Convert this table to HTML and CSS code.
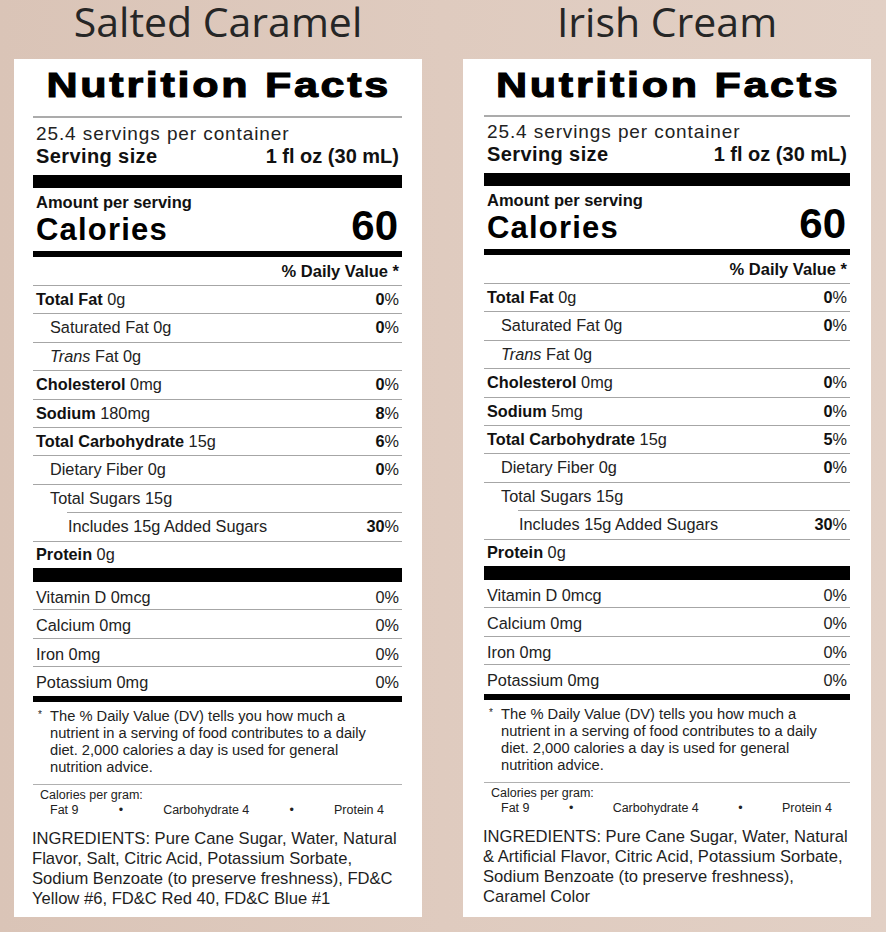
FILE: index.html
```html
<!DOCTYPE html>
<html lang="en">
<head>
<meta charset="utf-8">
<title>Nutrition Facts</title>
<link rel="stylesheet" href="styles.css">
</head>
<body>
<main class="page">
  <section class="product">
    <h2 class="flavor">Salted Caramel</h2>
    <div class="label label--left">
      <h1 class="nf-title">Nutrition Facts</h1>
      <div class="rule-thin"></div>
      <div class="servings">25.4 servings per container</div>
      <div class="serving-size"><span>Serving size</span><span>1 fl oz (30 mL)</span></div>
      <div class="bar bar-13"></div>
      <div class="amount">Amount per serving</div>
      <div class="calories"><span class="cal-label">Calories</span><span class="cal-num">60</span></div>
      <div class="bar bar-6"></div>
      <div class="dv-head">% Daily Value *</div>
      <div class="row"><span><b>Total Fat</b> 0g</span><span><b>0</b>%</span></div>
      <div class="row sub"><span>Saturated Fat 0g</span><span><b>0</b>%</span></div>
      <div class="row sub"><span><i>Trans</i> Fat 0g</span><span></span></div>
      <div class="row"><span><b>Cholesterol</b> 0mg</span><span><b>0</b>%</span></div>
      <div class="row"><span><b>Sodium</b> 180mg</span><span><b>8</b>%</span></div>
      <div class="row"><span><b>Total Carbohydrate</b> 15g</span><span><b>6</b>%</span></div>
      <div class="row sub"><span>Dietary Fiber 0g</span><span><b>0</b>%</span></div>
      <div class="row sub row--open"><span>Total Sugars 15g</span><span></span></div>
      <div class="rule-indent"></div>
      <div class="row subsub"><span>Includes 15g Added Sugars</span><span><b>30</b>%</span></div>
      <div class="row row--protein"><span><b>Protein</b> 0g</span><span></span></div>
      <div class="bar bar-14"></div>
      <div class="row vit"><span>Vitamin D 0mcg</span><span>0%</span></div>
      <div class="row vit"><span>Calcium 0mg</span><span>0%</span></div>
      <div class="row vit"><span>Iron 0mg</span><span>0%</span></div>
      <div class="row vit row--open"><span>Potassium 0mg</span><span>0%</span></div>
      <div class="bar bar-6b"></div>
      <div class="footnote"><span class="ast">*</span><p class="footnote-text">The % Daily Value (DV) tells you how much a nutrient in a serving of food contributes to a daily diet. 2,000 calories a day is used for general nutrition advice.</p></div>
      <div class="cal-gram">Calories per gram:</div>
      <div class="macros"><span>Fat 9</span><span>•</span><span>Carbohydrate 4</span><span>•</span><span>Protein 4</span></div>
      <p class="ingredients">INGREDIENTS: Pure Cane Sugar, Water, Natural Flavor, Salt, Citric Acid, Potassium Sorbate, Sodium Benzoate (to preserve freshness), FD&amp;C Yellow #6, FD&amp;C Red 40, FD&amp;C Blue #1</p>
    </div>
  </section>

  <section class="product">
    <h2 class="flavor">Irish Cream</h2>
    <div class="label label--right">
      <h1 class="nf-title">Nutrition Facts</h1>
      <div class="rule-thin"></div>
      <div class="servings">25.4 servings per container</div>
      <div class="serving-size"><span>Serving size</span><span>1 fl oz (30 mL)</span></div>
      <div class="bar bar-13"></div>
      <div class="amount">Amount per serving</div>
      <div class="calories"><span class="cal-label">Calories</span><span class="cal-num">60</span></div>
      <div class="bar bar-6"></div>
      <div class="dv-head">% Daily Value *</div>
      <div class="row"><span><b>Total Fat</b> 0g</span><span><b>0</b>%</span></div>
      <div class="row sub"><span>Saturated Fat 0g</span><span><b>0</b>%</span></div>
      <div class="row sub"><span><i>Trans</i> Fat 0g</span><span></span></div>
      <div class="row"><span><b>Cholesterol</b> 0mg</span><span><b>0</b>%</span></div>
      <div class="row"><span><b>Sodium</b> 5mg</span><span><b>0</b>%</span></div>
      <div class="row"><span><b>Total Carbohydrate</b> 15g</span><span><b>5</b>%</span></div>
      <div class="row sub"><span>Dietary Fiber 0g</span><span><b>0</b>%</span></div>
      <div class="row sub row--open"><span>Total Sugars 15g</span><span></span></div>
      <div class="rule-indent"></div>
      <div class="row subsub"><span>Includes 15g Added Sugars</span><span><b>30</b>%</span></div>
      <div class="row row--protein"><span><b>Protein</b> 0g</span><span></span></div>
      <div class="bar bar-14"></div>
      <div class="row vit"><span>Vitamin D 0mcg</span><span>0%</span></div>
      <div class="row vit"><span>Calcium 0mg</span><span>0%</span></div>
      <div class="row vit"><span>Iron 0mg</span><span>0%</span></div>
      <div class="row vit row--open"><span>Potassium 0mg</span><span>0%</span></div>
      <div class="bar bar-6b"></div>
      <div class="footnote"><span class="ast">*</span><p class="footnote-text">The % Daily Value (DV) tells you how much a nutrient in a serving of food contributes to a daily diet. 2,000 calories a day is used for general nutrition advice.</p></div>
      <div class="cal-gram">Calories per gram:</div>
      <div class="macros"><span>Fat 9</span><span>•</span><span>Carbohydrate 4</span><span>•</span><span>Protein 4</span></div>
      <p class="ingredients">INGREDIENTS: Pure Cane Sugar, Water, Natural &amp; Artificial Flavor, Citric Acid, Potassium Sorbate, Sodium Benzoate (to preserve freshness), Caramel Color</p>
    </div>
  </section>
</main>
</body>
</html>
```

FILE: styles.css
```css
* { box-sizing: border-box; }

html, body {
  margin: 0;
  height: 932px;
  overflow: hidden;
}

body {
  background: linear-gradient(90deg, #dac4b7 0%, #dfcbbf 50%, #e2d0c5 100%);
  font-family: "Liberation Sans", Arial, sans-serif;
  color: #1c1c1c;
}

.page {
  display: flex;
  gap: 41px;
  padding-left: 14px;
}

.product {
  width: 408px;
  display: flex;
  flex-direction: column;
}

.flavor {
  margin: 0;
  height: 59px;
  font-family: "Open Sans", sans-serif;
  font-weight: 400;
  font-size: 41px;
  line-height: 42px;
  text-align: center;
  color: #262626;
}

.label {
  background: #fff;
  height: 858px;
  padding: 0 20px 0 19px;
}

.label--right {
  padding: 0 21px 0 21px;
}

.nf-title {
  margin: 6px 0 0;
  font-size: 35px;
  line-height: 40px;
  font-weight: 700;
  text-align: center;
  letter-spacing: 2.2px;
  padding-left: 2px;
  color: #000;
  -webkit-text-stroke: 1.1px #000;
  transform: scaleX(1.23);
}

.rule-thin {
  height: 2px;
  background: #ababab;
  margin-top: 11px;
}

.label--right .rule-thin { margin-top: 10px; }
.label--right .servings { margin-top: 4px; }

.servings {
  margin-top: 5px;
  padding-left: 3px;
  font-size: 19px;
  line-height: 22px;
  letter-spacing: 0.9px;
  color: #222;
}

.serving-size {
  display: flex;
  justify-content: space-between;
  padding: 0 3px;
  font-size: 20px;
  line-height: 23px;
  font-weight: 700;
  color: #111;
}

.serving-size span:first-child { letter-spacing: 0.4px; }

.bar { background: #000; }
.bar-13 { height: 13px; margin-top: 7px; }
.bar-6 { height: 6px; margin-top: 6px; }
.bar-14 { height: 14px; }
.bar-6b { height: 6px; }

.amount {
  margin-top: 6px;
  padding-left: 3px;
  font-size: 16.5px;
  line-height: 17px;
  font-weight: 700;
  color: #111;
}

.calories {
  display: flex;
  justify-content: space-between;
  align-items: baseline;
  padding: 0 4px 0 3px;
  line-height: 30px;
  font-weight: 700;
  color: #000;
}

.cal-label {
  font-size: 31px;
  letter-spacing: 1.2px;
}

.cal-num {
  font-size: 42px;
}

.dv-head {
  margin-top: 4px;
  padding: 0 3px 4px;
  text-align: right;
  font-size: 16.5px;
  line-height: 20px;
  font-weight: 700;
  color: #111;
  border-bottom: 1px solid #a6a6a6;
}

.row {
  display: flex;
  justify-content: space-between;
  height: 28.4px;
  padding: 0 3px;
  font-size: 16.3px;
  line-height: 27.4px;
  color: #222;
  border-bottom: 1px solid #a6a6a6;
}

.row b { color: #111; }

.row.sub { padding-left: 17px; }

.row.subsub { padding-left: 35px; }

.row--open {
  border-bottom: none;
  height: 27.4px;
}

.rule-indent {
  height: 1px;
  margin-left: 34px;
  background: #a6a6a6;
}

.row--protein {
  border-bottom: none;
  height: 26.4px;
  line-height: 24.4px;
}

.row.vit {
  height: 28.5px;
  line-height: 30px;
}

.row.vit.row--open { height: 28.5px; }

.footnote {
  display: flex;
  margin-top: 6px;
  padding: 0 0 8px 5px;
  border-bottom: 1px solid #b0b0b0;
  font-size: 14.7px;
  line-height: 17px;
  color: #222;
}

.ast {
  width: 12px;
  flex: none;
  font-size: 10px;
  line-height: 14px;
}

.footnote-text {
  margin: 0;
  width: 338px;
}

.cal-gram {
  margin-top: 3px;
  padding-left: 7px;
  font-size: 12.5px;
  line-height: 15px;
  color: #222;
}

.macros {
  display: flex;
  justify-content: space-between;
  padding: 0 18px 0 17px;
  font-size: 12.5px;
  line-height: 15px;
  color: #222;
}

.ingredients {
  margin: 11px 0 0 -1px;
  font-size: 16.6px;
  line-height: 20px;
  color: #1e1e1e;
}
```
